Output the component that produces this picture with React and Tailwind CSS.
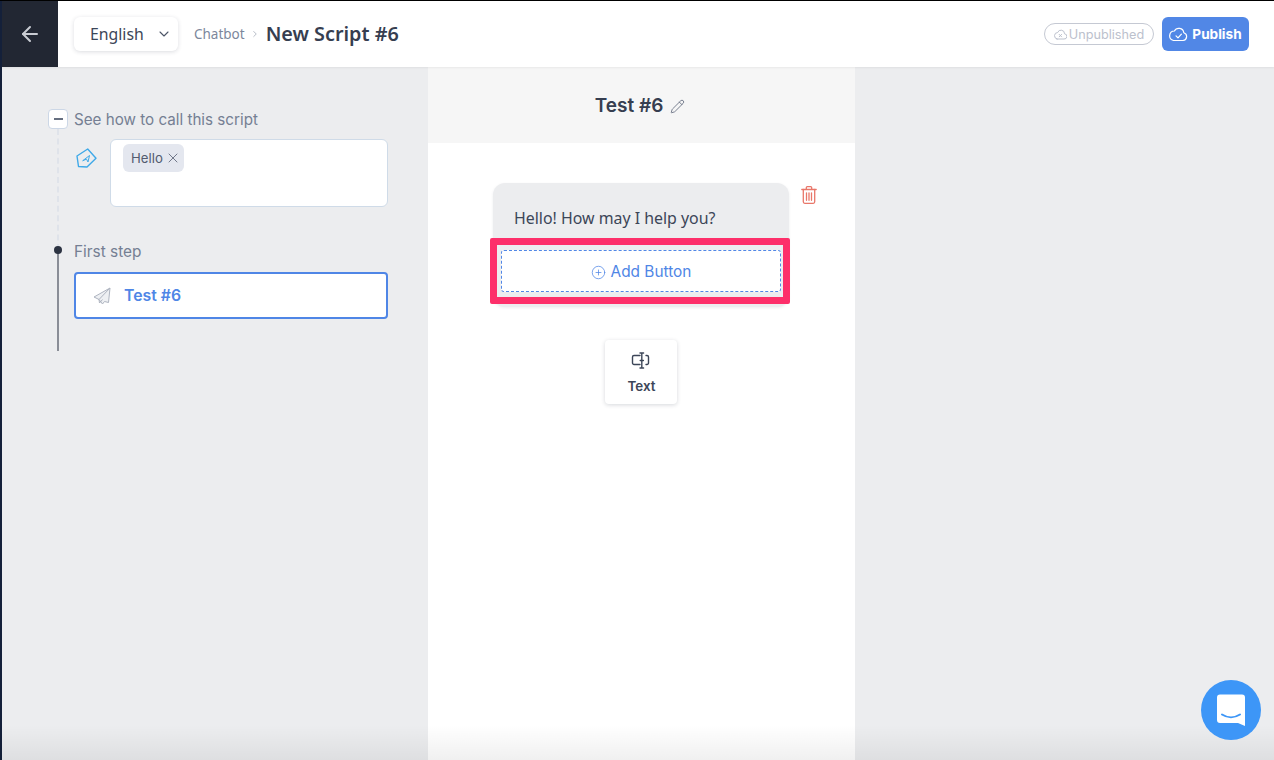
import React from 'react';
import { ArrowLeft, ChevronDown, ChevronRight, X, Pencil, CirclePlus } from 'lucide-react';

const noto = 'font-["Noto_Sans","Open_Sans",sans-serif]';

const TagIcon = () => (
  <svg width="21" height="20" viewBox="0 0 21 20" fill="none" stroke="#3fa9e8" strokeWidth="1.4" strokeLinejoin="round" strokeLinecap="round">
    <path d="M1 8 11.700 1 20 10.300 11 19 2.500 18.500z" />
    <path d="M7 12.500 13.500 7.500l-1.500 6.500-1.300-2.500z" strokeWidth="1" />
  </svg>
);

const CloudCheck = () => (
  <svg width="19" height="16" viewBox="0 0 19 16" fill="none" stroke="white" strokeWidth="1.2" strokeLinecap="round" strokeLinejoin="round">
    <path d="M4.500 14.500h9.500a4 4 0 0 0 .8-7.800A5 5 0 0 0 5.400 5 4.800 4.800 0 0 0 4.500 14.500z" />
    <path d="M7 9.800l2 2 3.400-3.600" />
  </svg>
);

const CloudX = () => (
  <svg width="13" height="11" viewBox="0 0 13 11" fill="none" stroke="#bcc1cd" strokeWidth="1" strokeLinecap="round" strokeLinejoin="round">
    <path d="M3 10h7a2.600 2.600 0 0 0 .5-5.200A3.500 3.500 0 0 0 3.700 3.500 3.300 3.300 0 0 0 3 10z" />
    <path d="M5.200 5.400l2.400 2.400M7.600 5.400 5.200 7.800" />
  </svg>
);

const PlaneIcon = () => (
  <svg width="18" height="18" viewBox="0 0 18 18" fill="#eef0f3" stroke="#aeb4c0" strokeWidth="1" strokeLinejoin="round">
    <path d="M17 1 1 10l5 2.500L9.500 17l2-2.500 4 1z" />
    <path d="M17 1 6 12.500l.5 3.500 3-3.500" fill="none" />
  </svg>
);

const TrashIcon = () => (
  <svg width="16" height="18" viewBox="0 0 16 18" fill="none" stroke="#e9776a" strokeWidth="1.3" strokeLinecap="round" strokeLinejoin="round">
    <path d="M.8 3.500h14.400M5.300 3.300V1.700a1 1 0 0 1 1-1h3.400a1 1 0 0 1 1 1v1.600" />
    <path d="M2.300 3.500v12.300a1.500 1.500 0 0 0 1.500 1.500h8.400a1.500 1.500 0 0 0 1.500-1.500V3.500" />
    <path d="M5.500 6.800v7.500M8 6.800v7.500M10.500 6.800v7.500" />
  </svg>
);

const TextIcon = () => (
  <svg width="20" height="17" viewBox="0 0 20 17" fill="none" stroke="#3c4658" strokeWidth="1.400" strokeLinecap="round">
    <path d="M9 3.500H3a1.500 1.500 0 0 0-1.500 1.500v6A1.500 1.500 0 0 0 3 12.500h6" />
    <path d="M15 3.500h1a1.500 1.500 0 0 1 1.500 1.500v6a1.500 1.500 0 0 1-1.500 1.500h-1" />
    <path d="M10.800 1v15M9 1h3.600M9 16h3.600M9.200 8.500h3.200" />
  </svg>
);

const Header = () => (
  <header className="h-[67px] shrink-0 flex items-stretch bg-white border-t border-black shadow-[0_1px_2px_rgba(0,0,0,0.06)] z-10">
    <div className="w-[58px] shrink-0 bg-[#222733] border-l-2 border-[#14203a] flex items-center justify-center">
      <ArrowLeft size={24} strokeWidth={2} className="text-[#c9ccd3]" />
    </div>
    <div className={`flex items-center ${noto}`}>
      <div className="ml-4 w-[104px] h-[34px] rounded-md bg-white shadow-[0_1px_4px_rgba(30,40,60,0.16)] flex items-center pl-4 text-[15.8px] text-[#3c4658]">
        <span className="pt-[2px]">English</span>
        <ChevronDown size={16} strokeWidth={1.6} className="ml-[12px] text-[#4b5567]" />
      </div>
      <span className="ml-4 text-[13.5px] text-[#7c879c]">Chatbot</span>
      <ChevronRight size={10} className="mx-[5px] text-[#a9b0bd]" />
      <span className="ml-[1px] text-[19.8px] font-semibold text-[#363e50]">New Script #6</span>
    </div>
    <div className="ml-auto flex items-center pr-[25px] font-['Inter',sans-serif]">
      <div className="w-[110px] h-[22px] rounded-full border border-[#c5c9d3] flex items-center justify-center gap-[2px] text-[12.7px] text-[#bcc1cd]">
        <CloudX />
        <span className="pt-[1px]">Unpublished</span>
      </div>
      <button className="ml-2 w-[87px] h-[34px] rounded-md bg-[#5187e6] text-white flex items-center justify-center gap-[4px] text-[13.6px] font-bold">
        <CloudCheck />
        <span>Publish</span>
      </button>
    </div>
  </header>
);

const LeftPanel = () => (
  <aside className="w-[426px] shrink-0 pt-[41px] pl-[46px] font-['Inter',sans-serif]">
    <div className="flex items-center gap-[6px] h-[21px]">
      <div className="w-5 h-5 rounded-[4px] bg-white border border-[#ccd7e6] flex items-center justify-center">
        <div className="w-[9px] h-[2px] bg-[#666f80]" />
      </div>
      <span className="pt-[4px] text-[15.2px] text-[#757f93]">See how to call this script</span>
    </div>
    <div className="ml-[9px] h-[121px] border-l-2 border-dashed border-[#dfe3ea] flex items-start pt-[10px]">
      <div className="ml-[17px] mt-[9px] w-[24px] flex"><TagIcon /></div>
      <div className="ml-[10px] w-[278px] h-[68px] rounded-md bg-white border border-[#cfdbe8] pl-3 pt-[4px]">
        <div className="inline-flex items-center h-7 rounded-md bg-[#e4e7ef] pl-2 pr-[3px] text-[13.2px] text-[#535c70] gap-[2px]">
          <span className="pt-[1px]">Hello</span>
          <X size={16} strokeWidth={1.2} />
        </div>
      </div>
    </div>
    <div className="flow-root ml-[9px] h-[101px] border-l-2 border-[#8a8e97] relative">
      <div className="absolute -left-[5px] -top-[4px] w-2 h-2 rounded-full bg-[#2c3342]" />
      <div className="pl-[15px] -mt-[11px]">
        <div className="text-[15.4px] leading-[21px] text-[#757f93] pt-[2px]">First step</div>
        <div className="mt-[10px] w-[314px] h-[47px] rounded-[4px] bg-white border-2 border-[#4f86e6] flex items-center pl-[17px]">
          <PlaneIcon />
          <span className="ml-[13px] text-[15.8px] font-semibold text-[#4f86e6]">Test #6</span>
        </div>
      </div>
    </div>
  </aside>
);

const CenterPanel = () => (
  <main className="w-[427px] shrink-0 bg-white flex flex-col">
    <div className="h-[76px] bg-[#f6f6f6] flex items-center justify-center gap-[7px] font-['Inter',sans-serif] pr-[3px] pt-[2px]">
      <span className="text-[19px] font-semibold text-[#363e50]">Test #6</span>
      <Pencil size={15} strokeWidth={1.3} className="text-[#5c6579]" />
    </div>
    <div className="flex flex-col items-center pt-10">
      <div className="relative w-[296px] ml-[-1px] rounded-[12px] bg-[#ecedef] shadow-[0_1px_3px_rgba(30,40,60,0.08)] pt-[24px] pb-[15px] px-[8px]">
        <div className={`pl-[13px] text-[15.9px] leading-[22px] text-[#3c4658] ${noto} mb-[21px]`}>Hello! How may I help you?</div>
        <div className="h-[42px] pt-[2px] rounded-[3px] bg-white border border-dashed border-[#5187e6] flex items-center justify-center gap-[5px] font-['Inter',sans-serif] text-[15.4px] text-[#4f86e6]">
          <CirclePlus size={15} strokeWidth={1.2} />
          <span>Add Button</span>
        </div>
        {/* highlight drawn over the button */}
        <div className="absolute left-[-3px] right-[-1px] top-[55px] h-[66px] rounded-[2px] border-[7px] border-[#fd2f6a]" />
        <div className="absolute -right-[28px] top-[3px]"><TrashIcon /></div>
      </div>
      <div className="mt-[33px] -ml-[2px] w-[72px] h-[64px] rounded-[4px] bg-white shadow-[0_1px_4px_rgba(30,40,60,0.18)] flex flex-col items-center pt-[12px] font-['Inter',sans-serif]">
        <TextIcon />
        <span className="mt-[7px] pl-[2px] text-[13.4px] font-semibold text-[#3c4658]">Text</span>
      </div>
    </div>
  </main>
);

export default function App() {
  return (
    <div className="relative w-[1274px] h-[760px] overflow-hidden flex flex-col bg-[#ecedef]">
      <Header />
      <div className="flex flex-1 border-l-2 border-[#14203a]">
        <LeftPanel />
        <CenterPanel />
      </div>
      {/* bottom fade */}
      <div className="absolute left-0 right-0 bottom-0 h-[35px] bg-gradient-to-b from-transparent to-black/[0.06] pointer-events-none" />
      {/* chat launcher */}
      <div className="absolute left-[1201px] top-[680px] w-[60px] h-[60px] rounded-full bg-[#3d96f7] flex items-center justify-center">
        <svg width="28" height="33" viewBox="0 0 28 33">
          <path d="M3 .5h22A3 3 0 0 1 28 3.500v28.500l-7-3H3a3 3 0 0 1-3-3V3.500A3 3 0 0 1 3 .5z" fill="white" />
          <path d="M5 20.500c5.500 3.600 12.500 3.600 18 0" fill="none" stroke="#3d96f7" strokeWidth="2" strokeLinecap="round" />
        </svg>
      </div>
    </div>
  );
}
